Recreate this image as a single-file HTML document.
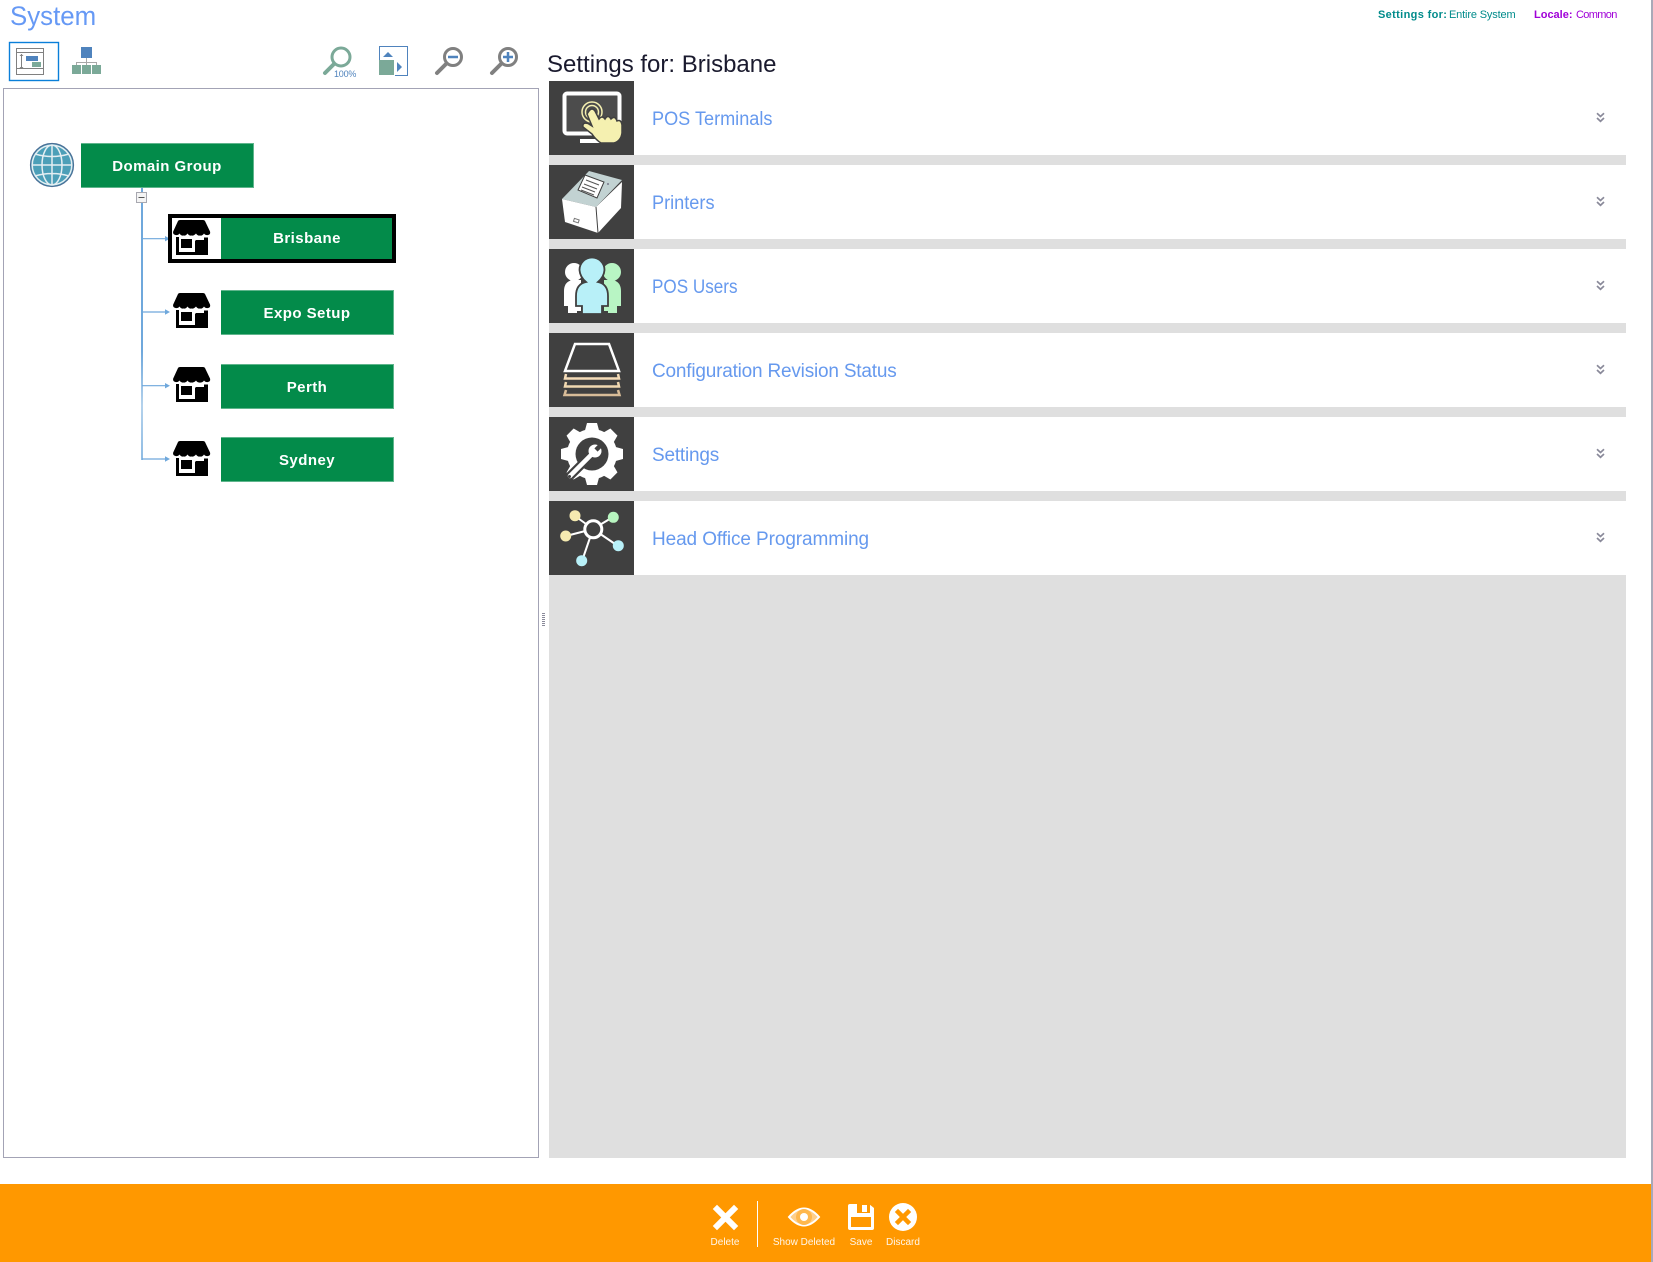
<!DOCTYPE html>
<html><head><meta charset="utf-8"><title>System</title>
<style>
html,body{margin:0;padding:0;background:#fff}
#p{position:relative;width:1653px;height:1262px;overflow:hidden;background:#fff;font-family:"Liberation Sans",sans-serif}
#p>*{position:absolute}
.t{white-space:nowrap;line-height:1}
.n{background:#038b4a;color:#fff;font-weight:bold;font-size:15px;letter-spacing:.45px;text-align:center;box-sizing:border-box;border:1px solid #5fb58c;border-left:0;left:221px;width:173px;height:45px;line-height:45px}
.ic{left:549px;width:85px;height:74px;background:#404040}
.row{left:634px;width:992px;height:74px;background:#fff}
.lb{left:652px;font-size:19px;color:#6699ee;white-space:nowrap;line-height:24px;transform-origin:0 50%}
.ch{left:1596px;width:9px;height:11px}
.fl{color:#fff;font-size:10px;line-height:12px;white-space:nowrap;text-align:center;top:1237px;opacity:.92}
</style></head><body><div id="p">

<div class="t" style="left:10px;top:0;font-size:27px;line-height:32px;color:#6699f5;transform:scaleX(.957);transform-origin:0 50%">System</div>
<div class="t" style="left:1378px;top:9px;font-size:11px;line-height:13px;font-weight:bold;color:#008b8b;letter-spacing:.35px">Settings for:</div>
<div class="t" style="left:1449px;top:9px;font-size:11px;line-height:13px;color:#008b8b;letter-spacing:-.15px">Entire System</div>
<div class="t" style="left:1534px;top:9px;font-size:11px;line-height:13px;font-weight:bold;color:#a000d8">Locale:</div>
<div class="t" style="left:1576px;top:9px;font-size:11px;line-height:13px;color:#a000d8;letter-spacing:-.65px">Common</div>

<!-- toolbar -->
<svg style="left:0;top:30px" width="120" height="60" viewBox="0 0 120 60">
<rect x="9.500" y="12.500" width="49" height="38" fill="#fff" stroke="#0a7fd9" stroke-width="1.400"/>
<rect x="16.500" y="18.500" width="27" height="26" fill="none" stroke="#808080"/>
<path d="M16 22.500H44M16 38.500H44" stroke="#808080"/>
<path d="M21.500 24V39" stroke="#808080"/><path d="M19.500 26l2-2 2 2zM19.500 37l2 2 2-2z" fill="#808080"/>
<rect x="26" y="26" width="12" height="5" fill="#4f83bd"/><rect x="32" y="32" width="9" height="5" fill="#7ba998"/>
<rect x="81" y="17" width="11" height="11" fill="#4f83bd"/>
<path d="M86.500 28V32.500M76.500 35V32.500H96.500V35M86.500 32.500V35" fill="none" stroke="#a8a8a8"/>
<rect x="72" y="35" width="9" height="9" fill="#7ba998"/><rect x="82" y="35" width="9" height="9" fill="#7ba998"/><rect x="92" y="35" width="9" height="9" fill="#7ba998"/>
</svg>
<svg style="left:310px;top:35px" width="220" height="50" viewBox="0 0 220 50">
<circle cx="31" cy="22" r="9" fill="none" stroke="#7ba998" stroke-width="3"/>
<path d="M24 29L15 38" stroke="#7ba998" stroke-width="4" stroke-linecap="round"/>
<text x="24" y="42" font-family="Liberation Sans" font-size="9" fill="#4f83bd" letter-spacing="-.2">100%</text>
<path d="M69.500 25V11.500H97.500V40.500H85" fill="none" stroke="#4f83bd"/>
<rect x="69" y="25" width="15" height="15" fill="#7ba998"/>
<path d="M73 22L78 17 83 22z" fill="#4f83bd"/>
<path d="M87 27L92 32 87 37z" fill="#4f83bd"/>
<circle cx="143" cy="22" r="8.500" fill="none" stroke="#808080" stroke-width="3"/>
<path d="M136 29L127 38" stroke="#808080" stroke-width="4" stroke-linecap="round"/>
<path d="M138 22H148" stroke="#4f83bd" stroke-width="2.500"/>
<circle cx="198" cy="22" r="8.500" fill="none" stroke="#808080" stroke-width="3"/>
<path d="M191 29L182 38" stroke="#808080" stroke-width="4" stroke-linecap="round"/>
<path d="M193 22H203M198 17V27" stroke="#4f83bd" stroke-width="2.500"/>
</svg>

<!-- tree panel -->
<div style="left:3px;top:88px;width:534px;height:1068px;border:1px solid #a3a3b5"></div>
<svg style="left:26px;top:140px" width="52" height="52" viewBox="0 0 52 52">
<circle cx="26" cy="25" r="21.500" fill="#4c9fb8" stroke="#4a6f96" stroke-width="1.200"/>
<g fill="none" stroke="#e4eef2" stroke-width="1.500"><circle cx="26" cy="25" r="19.800"/><ellipse cx="26" cy="25" rx="10" ry="20"/><path d="M26 5V45M6 25H46M9 14Q26 19 43 14M9 36Q26 31 43 36"/></g>
</svg>
<div class="n" style="left:81px;top:143px;border-left:0">Domain Group</div>

<svg style="left:130px;top:186px" width="45" height="280" viewBox="0 0 45 280">
<defs><linearGradient id="lg" x1="0" y1="0" x2="0" y2="1"><stop offset=".6" stop-color="#6fa8dc"/><stop offset=".8" stop-color="#b4d2ec"/><stop offset="1" stop-color="#8fbce4"/></linearGradient></defs>
<rect x="11" y="2" width="2" height="272" fill="url(#lg)"/>
<g stroke="#6fa8dc" stroke-width="1.200"><path d="M12 52.700H36M12 126H36M12 199.700H36M12 273H36"/></g>
<g fill="#6fa8dc"><path d="M35 50l5 2.700-5 2.700zM35 123.300l5 2.700-5 2.700zM35 197l5 2.700-5 2.700zM35 270.300l5 2.700-5 2.700z"/></g>
<rect x="6.500" y="6.500" width="10" height="10" fill="#f4f4f4" stroke="#a8a8b0"/><path d="M8.500 11.500H14.500" stroke="#555"/>
</svg>

<div style="left:168px;top:214px;width:220px;height:41px;border:4px solid #000;background:#fff"></div>
<div class="n" style="left:222px;top:218px;width:170px;height:41px;line-height:42px;border:0">Brisbane</div>
<div style="left:221px;top:218px;width:1px;height:41px;background:#038b4a"></div>
<div class="n" style="top:290px">Expo Setup</div>
<div class="n" style="top:364px">Perth</div>
<div class="n" style="top:437px">Sydney</div>

<svg width="0" height="0" style="left:0;top:0"><defs>
<g id="store">
<path d="M5 1Q5.500 0 7 0H30Q31.500 0 32 1L37 11.500Q37.800 14.500 35 15Q32.500 15.500 31 13.500Q29.500 16 27 15.500Q24.500 16 23 13.500Q21 16 18.500 15.500Q16 16 14.500 13.500Q13 16 10.500 15.500Q8 16 6.500 13.500Q5 15.500 2.500 15Q-.5 14.500 .2 11.500Z" fill="#000"/>
<path d="M3 17H6V32H22V20.500H31V17.500H35V35H3Z" fill="#000"/>
<rect x="8" y="19" width="11" height="9" fill="#000"/>
<rect x="23" y="20" width="9" height="13" fill="#000"/>
</g>
<g id="chev"><path d="M1 1.200L4.500 4.500 8 1.200M1 6L4.500 9.300 8 6" fill="none" stroke="#8a8a9a" stroke-width="1.700"/></g>
</defs></svg>
<svg style="left:173px;top:220px" width="38" height="36" viewBox="0 0 38 36"><use href="#store"/></svg>
<svg style="left:173px;top:293px" width="38" height="36" viewBox="0 0 38 36"><use href="#store"/></svg>
<svg style="left:173px;top:367px" width="38" height="36" viewBox="0 0 38 36"><use href="#store"/></svg>
<svg style="left:173px;top:441px" width="38" height="36" viewBox="0 0 38 36"><use href="#store"/></svg>

<!-- splitter grip -->
<svg style="left:542px;top:613px" width="4" height="14"><path d="M0 .5H3M0 2.500H3M0 4.500H3M0 6.500H3M0 8.500H3M0 10.500H3M0 12.500H3" stroke="#8a8a9a"/></svg>

<!-- right -->
<div class="t" style="left:547px;top:50px;font-size:24px;line-height:30px;color:#1a1a2e;letter-spacing:0">Settings for: Brisbane</div>
<div style="left:549px;top:155px;width:1077px;height:1003px;background:#dfdfdf"></div>

<div class="row" style="top:81px"></div><div class="row" style="top:165px"></div><div class="row" style="top:249px"></div><div class="row" style="top:333px"></div><div class="row" style="top:417px"></div><div class="row" style="top:501px"></div>

<svg class="ic" style="top:81px" viewBox="0 0 85 74">
<rect x="15.500" y="12.500" width="55" height="40" rx="2.500" fill="#4c4c4c" stroke="#fff" stroke-width="4"/>
<rect x="31" y="58" width="25" height="4" fill="#fff"/>
<g fill="none" stroke="#f5f0b0" stroke-width="1.500"><circle cx="43" cy="31" r="10"/><circle cx="43" cy="31" r="6.500"/></g>
<path d="M40 30Q43 26 46 30L50 38Q53 34 56 38Q59 33 62 38Q66 34 68 40Q72 38 73 44L73 52Q72 60 65 62H52Q47 59 43 53L34 46Q33 41 39 42.500L43 45L38 33Z" fill="#f5f0b0" stroke="#404040" stroke-width="1.500"/>
</svg>
<svg class="ic" style="top:165px" viewBox="0 0 85 74">
<path d="M40 6L73 15 47 42 13 34Z" fill="#c2d2d2"/>
<path d="M13 34L47 42 49 68 16 57Z" fill="#fff"/>
<path d="M47 42L73 17 72 43 49 68Z" fill="#fff"/><path d="M47 42L49 68" stroke="#404040"/>
<path d="M36 10L55 17 48 33 29 25Z" fill="#fff" stroke="#404040"/>
<path d="M37 15L50 20M35 19L48 24M33 22L46 27M32 25L45 30" stroke="#555" stroke-width="1"/>
<rect x="25" y="54" width="5" height="3" fill="none" stroke="#777" transform="rotate(18 27 55)"/>
<circle cx="59" cy="19" r="1" fill="#778"/>
</svg>
<svg class="ic" style="top:249px" viewBox="0 0 85 74">
<circle cx="25" cy="23" r="9" fill="#fff"/><path d="M15 42Q15 33 23 31H32V62H28V64H19V57H15Z" fill="#fff"/>
<circle cx="63" cy="23" r="9" fill="#b8f5c4"/><path d="M72 42Q72 33 64 31H55V62H59V64H68V57H72Z" fill="#b8f5c4"/>
<path d="M27 47Q27 35 37 33Q31 28 30.500 21A12.500 12.500 0 0 1 55.500 21Q55 28 49 33Q59 35 59 47V57H53V65H33V57H27Z" fill="#b8f0f8" stroke="#404040" stroke-width="1.800"/>
</svg>
<svg class="ic" style="top:333px" viewBox="0 0 85 74">
<path d="M26 11H60L70 38H16Z" fill="none" stroke="#fff" stroke-width="2.500"/>
<path d="M17 41L16 45.500H70L69 41" fill="none" stroke="#f5dcb8" stroke-width="2.500"/>
<path d="M17 49L16 53.500H70L69 49" fill="none" stroke="#f0d8b0" stroke-width="2.500"/>
<path d="M17 57L15.500 62H70.500L69 57" fill="none" stroke="#d8bc98" stroke-width="2.500"/>
</svg>
<svg class="ic" style="top:417px" viewBox="0 0 85 74">
<g fill="#fff" transform="translate(43 37)">
<circle r="25"/>
<path d="M-5-31H5L8-20H-8Z"/>
<path d="M-5-31H5L8-20H-8Z" transform="rotate(45)"/><path d="M-5-31H5L8-20H-8Z" transform="rotate(90)"/><path d="M-5-31H5L8-20H-8Z" transform="rotate(135)"/><path d="M-5-31H5L8-20H-8Z" transform="rotate(180)"/><path d="M-5-31H5L8-20H-8Z" transform="rotate(225)"/><path d="M-5-31H5L8-20H-8Z" transform="rotate(270)"/><path d="M-5-31H5L8-20H-8Z" transform="rotate(315)"/>
<circle r="16.500" fill="#404040"/>
</g>
<path d="M21 59L44 36" stroke="#404040" stroke-width="9"/>
<path d="M21 59L44 36" stroke="#fff" stroke-width="4.500" stroke-linecap="round"/>
<circle cx="46" cy="34" r="6.500" fill="#fff"/><path d="M47 33L54 26" stroke="#404040" stroke-width="4.500"/>
<circle cx="20.500" cy="59.500" r="1.500" fill="#404040"/>
</svg>
<svg class="ic" style="top:501px" viewBox="0 0 85 74">
<path d="M26 15L44 28M64 16L44 28M17 35L44 28M69 45L44 28M33 60L44 28" stroke="#fff" stroke-width="2"/>
<circle cx="44.300" cy="28.300" r="8.500" fill="#404040" stroke="#fff" stroke-width="3"/>
<circle cx="26" cy="14.700" r="5.500" fill="#f5eab0"/><circle cx="64.300" cy="16.300" r="5.500" fill="#b8f5c0"/><circle cx="16.700" cy="35" r="5.500" fill="#f5eab0"/><circle cx="69.300" cy="44.700" r="5.500" fill="#b8f0f8"/><circle cx="32.700" cy="59.700" r="5.500" fill="#b8f0f8"/>
</svg>

<div class="lb" style="top:108px;transform:scaleX(.953)">POS Terminals</div>
<div class="lb" style="top:192px;transform:scaleX(.955)">Printers</div>
<div class="lb" style="top:276px;transform:scaleX(.9)">POS Users</div>
<div class="lb" style="top:360px;letter-spacing:-.2px">Configuration Revision Status</div>
<div class="lb" style="top:444px;letter-spacing:-.2px">Settings</div>
<div class="lb" style="top:528px;letter-spacing:-.1px">Head Office Programming</div>

<svg class="ch" style="top:112px" viewBox="0 0 9 11"><use href="#chev"/></svg>
<svg class="ch" style="top:196px" viewBox="0 0 9 11"><use href="#chev"/></svg>
<svg class="ch" style="top:280px" viewBox="0 0 9 11"><use href="#chev"/></svg>
<svg class="ch" style="top:364px" viewBox="0 0 9 11"><use href="#chev"/></svg>
<svg class="ch" style="top:448px" viewBox="0 0 9 11"><use href="#chev"/></svg>
<svg class="ch" style="top:532px" viewBox="0 0 9 11"><use href="#chev"/></svg>

<!-- bottom bar -->
<div style="left:0;top:1184px;width:1651px;height:78px;background:#ff9800"></div>
<div style="left:1651px;top:0;width:2px;height:1262px;background:#a9a9b8"></div>
<svg style="left:700px;top:1195px" width="240" height="52" viewBox="700 1195 240 52">
<path d="M717 1209L734 1226M734 1209L717 1226" stroke="#fff" stroke-width="6" stroke-linecap="square"/>
<rect x="757" y="1201" width="1" height="46" fill="#fff"/>
<path d="M789 1217Q804 1200 819 1217Q804 1234 789 1217Z" fill="#ffcf8a" stroke="#fff" stroke-width="2"/>
<circle cx="804" cy="1217" r="8" fill="#ffb84d"/><circle cx="804" cy="1217" r="4" fill="#fff"/>
<path d="M850 1204H869L874 1208V1228Q874 1230 872 1230H850Q848 1230 848 1228V1206Q848 1204 850 1204Z" fill="#fff"/>
<rect x="857" y="1204" width="13" height="9" fill="#ff9800"/><rect x="862" y="1205" width="5" height="7" fill="#fff"/>
<rect x="851" y="1217" width="20" height="10" fill="#ff9800"/>
<circle cx="903" cy="1217" r="14" fill="#fff"/>
<path d="M898 1212L908 1222M908 1212L898 1222" stroke="#ff9800" stroke-width="4.500" stroke-linecap="square"/>
</svg>
<div class="fl" style="left:705px;width:40px">Delete</div>
<div class="fl" style="left:764px;width:80px">Show Deleted</div>
<div class="fl" style="left:841px;width:40px">Save</div>
<div class="fl" style="left:883px;width:40px">Discard</div>

</div></body></html>
